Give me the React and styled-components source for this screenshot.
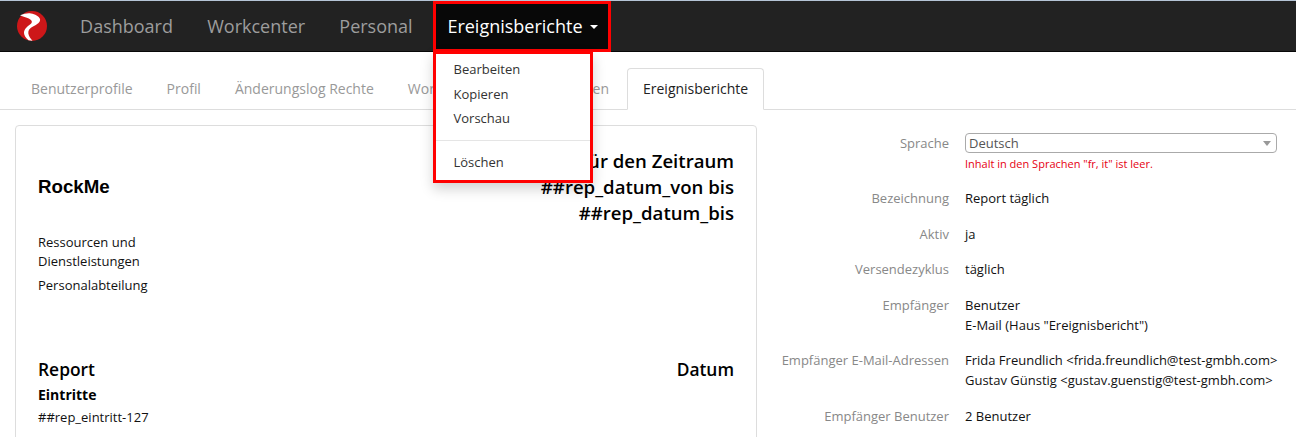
import React from "react";
import styled, { createGlobalStyle } from "styled-components";

const GlobalStyle = createGlobalStyle`
  html, body {
    margin: 0;
    background: #fff;
    height: 437px;
    overflow: hidden;
    font-family: "Open Sans", sans-serif;
    font-size: 13px;
    color: #111;
  }
`;

const Navbar = styled.nav`
  display: flex;
  align-items: stretch;
  height: 52px;
  background: #222;
  border-top: 1px solid #b5c4d6;
  border-bottom: 1px solid #080808;
  box-sizing: border-box;
`;

const Brand = styled.a`
  display: flex;
  align-items: center;
  width: 63px;
  padding-left: 17px;
  box-sizing: border-box;
`;

const NavItem = styled.a`
  display: flex;
  align-items: center;
  padding: 0 17.1px;
  font-size: 18px;
  color: #9d9d9d;
  text-decoration: none;
`;

const OpenNavItem = styled(NavItem)`
  margin: 0 0 -1px 3.2px;
  padding: 0 14.5px 1px;
  width: 178px;
  box-sizing: border-box;
  background: #080808;
  color: #fff;
  outline: 3px solid #f00;
  outline-offset: -3px;
  gap: 7px;
`;

const Caret = styled.span`
  width: 0;
  height: 0;
  margin-top: 2px;
  border-top: 4px solid #fff;
  border-left: 4px solid transparent;
  border-right: 4px solid transparent;
`;

const Menu = styled.ul`
  position: absolute;
  top: 51px;
  left: 433px;
  z-index: 10;
  width: 160px;
  height: 132px;
  margin: 0;
  padding: 3px 0 0;
  box-sizing: border-box;
  list-style: none;
  background: #fff;
  border: 3px solid #f00;
  box-shadow: 0 6px 12px rgba(0, 0, 0, 0.18);
`;

const MenuItem = styled.li`
  padding: 0 17.5px;
  height: 24.5px;
  line-height: 24.5px;
  color: #333;
  font-size: 13px;
`;

const MenuDivider = styled.li`
  height: 1px;
  margin: 9px 0;
  background: #e5e5e5;
`;

const Tabs = styled.ul`
  display: flex;
  align-items: flex-end;
  height: 58px;
  margin: 0;
  padding: 0 0 0 15px;
  box-sizing: border-box;
  list-style: none;
  border-bottom: 1px solid #ddd;
`;

const Tab = styled.li`
  margin: 0 2px -1px 0;
  padding: 10px 15px;
  height: 42px;
  box-sizing: border-box;
  border: 1px solid ${(props) => (props.$active ? "#ddd" : "transparent")};
  border-bottom-color: ${(props) => (props.$active ? "#fff" : "transparent")};
  border-radius: 4px 4px 0 0;
  background: ${(props) => (props.$active ? "#fff" : "transparent")};
  color: ${(props) => (props.$active ? "#222" : "#999")};
  font-size: 14px;
  line-height: 20px;
  white-space: nowrap;
`;

const Content = styled.main`
  display: grid;
  grid-template-columns: 742px 1fr;
  padding: 15px 0 0 15px;
`;

const Card = styled.section`
  height: 340px;
  padding: 22px 22px 0;
  box-sizing: border-box;
  border: 1px solid #ddd;
  border-radius: 4px;
`;

const CardHeader = styled.div`
  display: flex;
  align-items: center;
  justify-content: space-between;
`;

const Company = styled.h1`
  margin: 0;
  font-family: "Liberation Sans", Arial, sans-serif;
  font-size: 18.72px;
  font-weight: 700;
  color: #000;
`;

const PeriodTitle = styled.h2`
  width: 280px;
  margin: 0;
  font-size: 18.6px;
  font-weight: 600;
  line-height: 26px;
  text-align: right;
  color: #000;
`;

const Address = styled.div`
  margin-top: 7px;
  width: 130px;
  line-height: 19px;
`;

const Department = styled.div`
  margin-top: 5px;
  line-height: 19px;
`;

const ReportHeader = styled.div`
  display: flex;
  justify-content: space-between;
  margin-top: 62px;
  font-size: 17.4px;
  font-weight: 600;
  line-height: 24px;
  color: #000;
`;

const SectionTitle = styled.div`
  margin-top: 4px;
  font-size: 14px;
  font-weight: 700;
  line-height: 20px;
  color: #000;
`;

const Placeholder = styled.div`
  margin-top: 3px;
  line-height: 19px;
`;

const Details = styled.dl`
  display: grid;
  grid-template-columns: 192px 312px;
  column-gap: 16px;
  align-content: start;
  margin: 8px 0 0;
`;

const Label = styled.dt`
  margin-bottom: ${(props) => props.$gap ?? 15.5}px;
  color: #888;
  line-height: 20px;
  text-align: right;
  white-space: nowrap;
`;

const Value = styled.dd`
  margin: 0 0 ${(props) => props.$gap ?? 15.5}px;
  line-height: 20px;
  color: #111;
  white-space: nowrap;
`;

const Select = styled.div`
  position: relative;
  height: 20px;
  padding-left: 3px;
  box-sizing: border-box;
  border: 1px solid #aaa;
  border-radius: 4px;
  color: #555;
  line-height: 18px;
`;

const SelectArrow = styled.span`
  position: absolute;
  top: 7px;
  right: 5px;
  border-top: 5px solid #999;
  border-left: 4px solid transparent;
  border-right: 4px solid transparent;
`;

const ErrorText = styled.div`
  margin-top: 2px;
  font-size: 11px;
  line-height: 17px;
  color: #e60012;
`;

const Logo = () => (
  <svg width="30" height="30" viewBox="0 0 30 30">
    <circle cx="15" cy="15" r="15" fill="#cd1719" />
    <path
      d="M3 4.3C7 2.6 11 1.8 14 2.4C18 3.2 22 5 23 8C23.8 11 20 13.5 16 15.5C13 17 11 19 11.3 22.3C11.6 25 13.5 27.5 15.5 29.8L11.5 29.2C9 27 7 24.5 7 22C7 18 10.5 15.5 13 13.5C15 12 15.5 10.5 14 9C11.5 6.8 7 6 3 4.3Z"
      fill="#fff"
    />
  </svg>
);

export default function App() {
  return (
    <>
      <GlobalStyle />
      <Navbar>
        <Brand>
          <Logo />
        </Brand>
        <NavItem>Dashboard</NavItem>
        <NavItem>Workcenter</NavItem>
        <NavItem>Personal</NavItem>
        <OpenNavItem>
          Ereignisberichte <Caret />
        </OpenNavItem>
      </Navbar>
      <Menu>
        <MenuItem>Bearbeiten</MenuItem>
        <MenuItem>Kopieren</MenuItem>
        <MenuItem>Vorschau</MenuItem>
        <MenuDivider />
        <MenuItem>Löschen</MenuItem>
      </Menu>
      <Tabs>
        <Tab>Benutzerprofile</Tab>
        <Tab>Profil</Tab>
        <Tab>Änderungslog Rechte</Tab>
        <Tab>Workcenter Mitarbeiterformen</Tab>
        <Tab $active>Ereignisberichte</Tab>
      </Tabs>
      <Content>
        <Card>
          <CardHeader>
            <Company>RockMe</Company>
            <PeriodTitle>
              Bericht für den Zeitraum ##rep_datum_von bis ##rep_datum_bis
            </PeriodTitle>
          </CardHeader>
          <Address>Ressourcen und Dienstleistungen</Address>
          <Department>Personalabteilung</Department>
          <ReportHeader>
            <span>Report</span>
            <span>Datum</span>
          </ReportHeader>
          <SectionTitle>Eintritte</SectionTitle>
          <Placeholder>##rep_eintritt-127</Placeholder>
        </Card>
        <Details>
          <Label $gap={26}>Sprache</Label>
          <Value $gap={16}>
            <Select>
              Deutsch
              <SelectArrow />
            </Select>
            <ErrorText>Inhalt in den Sprachen "fr, it" ist leer.</ErrorText>
          </Value>
          <Label>Bezeichnung</Label>
          <Value>Report täglich</Value>
          <Label>Aktiv</Label>
          <Value>ja</Value>
          <Label>Versendezyklus</Label>
          <Value>täglich</Value>
          <Label>Empfänger</Label>
          <Value>
            Benutzer
            <br />
            E-Mail (Haus "Ereignisbericht")
          </Value>
          <Label>Empfänger E-Mail-Adressen</Label>
          <Value>
            {"Frida Freundlich <frida.freundlich@test-gmbh.com>"}
            <br />
            {"Gustav Günstig <gustav.guenstig@test-gmbh.com>"}
          </Value>
          <Label>Empfänger Benutzer</Label>
          <Value>2 Benutzer</Value>
        </Details>
      </Content>
    </>
  );
}
